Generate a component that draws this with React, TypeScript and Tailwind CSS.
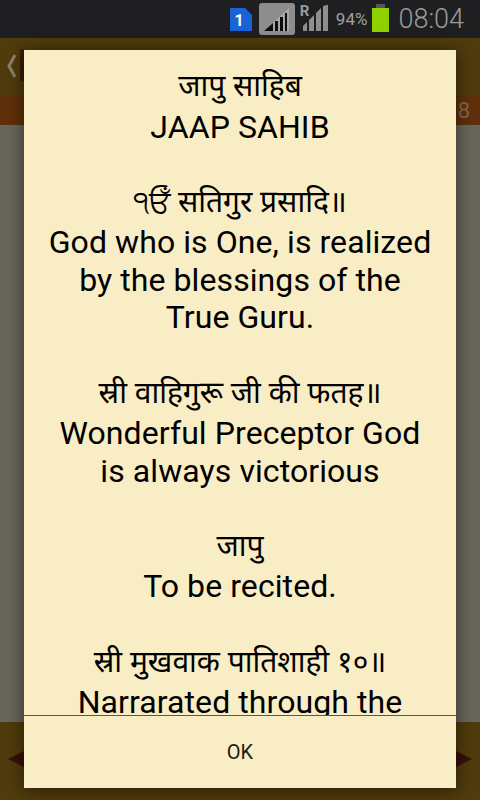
import React from 'react';

const lines: { text: string; hi?: boolean }[] = [
  { text: 'जापु साहिब', hi: true },
  { text: 'JAAP SAHIB' },
  { text: '' },
  { text: '੧ਓਁ सतिगुर प्रसादि॥', hi: true },
  { text: 'God who is One, is realized' },
  { text: 'by the blessings of the' },
  { text: 'True Guru.' },
  { text: '' },
  { text: 'स्री वाहिगुरू जी की फतह॥', hi: true },
  { text: 'Wonderful Preceptor God' },
  { text: 'is always victorious' },
  { text: '' },
  { text: 'जापु', hi: true },
  { text: 'To be recited.' },
  { text: '' },
  { text: 'स्री मुखवाक पातिशाही १०॥', hi: true },
  { text: 'Narrarated through the' },
];

const StatusBar = () => (
  <div className="h-[38px] bg-[#1f1f21] flex items-center justify-end pr-[16px] font-['Roboto',sans-serif]">
    <svg width="24" height="25" viewBox="0 0 24 25" className="mr-[6px]">
      <path d="M1 1h15l7 7v16H1z" fill="#1a62d6" />
      <text x="10" y="19" textAnchor="middle" fontSize="16" fontWeight="700" fill="#fff" fontFamily="Roboto">1</text>
    </svg>
    <svg width="36" height="32" viewBox="0 0 36 32" className="mr-[5px]">
      <rect x="0" y="0" width="36" height="32" rx="3" fill="#8d8d8d" />
      <path d="M5 28 30 5v23z" fill="#a8a8a8" />
      <path d="M5 28 14 20v8zM16 18h3v10h-3zM21 14h3v14h-3zM26 10h2v18h-2z" fill="#0c0c0c" />
    </svg>
    <div className="relative w-[32px] h-[32px] mr-[4px]">
      <span className="absolute left-0 top-[-1px] text-[15px] leading-[18px] font-bold text-[#9a9a9a]">R</span>
      <svg width="32" height="32" viewBox="0 0 32 32" className="absolute inset-0">
        <path d="M3 28v-5l4-4v9zM9 28V17l5-5v16zM16 28V10l5-5v23zM23 28V3l4-1h1v26z" fill="#8f8f8f" />
      </svg>
    </div>
    <span className="text-[17px] text-[#a0a0a0] leading-none mr-[4px]">94%</span>
    <svg width="19" height="30" viewBox="0 0 19 30" className="mr-[8px]">
      <rect x="5" y="0" width="9" height="4" fill="#555" />
      <rect x="1" y="4" width="17" height="24" fill="#8fd000" />
    </svg>
    <span className="text-[27px] text-[#9a9a9a] leading-none font-light">08:04</span>
  </div>
);

const App: React.FC = () => {
  return (
    <div className="relative w-[480px] h-[800px] overflow-hidden flex flex-col bg-[#66665a]">
      <StatusBar />

      {/* dimmed page behind the dialog */}
      <div className="h-[57px] bg-[#503b0c] flex items-center gap-[3px] pl-[7px]">
        <svg width="10" height="26" viewBox="0 0 10 26" className="mt-[-2px]">
          <path d="M8 2 2 13l6 11" fill="none" stroke="#8c8168" strokeWidth="3" />
        </svg>
        <div className="w-[5px] h-[32px] bg-[#3a1c08] rounded-l-[2px] mt-[-4px]" />
      </div>
      <div className="h-[30px] bg-[#5f300b] flex items-center justify-end pr-[10px]">
        <span className="text-[#86654a] text-[22px] font-['Roboto',sans-serif]">8</span>
      </div>
      <div className="flex-1 bg-[#66665a]" />
      <div className="h-[78px] bg-[#503b0c] flex items-center justify-between">
        <div className="w-0 h-0 border-y-[8px] border-y-transparent border-r-[16px] border-r-[#3a0f08] ml-[8px] mt-[-4px]" />
        <div className="w-0 h-0 border-y-[8px] border-y-transparent border-l-[16px] border-l-[#3a0f08] mr-[8px] mt-[-4px]" />
      </div>

      {/* dialog */}
      <div className="absolute left-[24px] top-[50px] w-[432px] h-[738px] bg-[#f8edc5] flex flex-col shadow-[0_2px_16px_rgba(0,0,0,0.55)]">
        <div className="h-[665px] overflow-hidden pt-[18px] text-center text-black font-['Roboto','Noto_Sans',sans-serif]">
          {lines.map((l, i) =>
            l.hi ? (
              <div key={i} className="h-[40.5px] leading-[34px] text-[30px] font-['Noto_Sans','Noto_Sans_Devanagari','Lohit_Devanagari',sans-serif]">
                {l.text}
              </div>
            ) : (
              <div key={i} className="h-[37.6px] leading-[37.6px] text-[32px] tracking-[0.08px] whitespace-nowrap">
                {l.text || '\u00a0'}
              </div>
            ),
          )}
        </div>
        <div className="h-px bg-[#5c5a4c]" />
        <div className="flex-1 flex items-center justify-center text-[20px] text-[#1c1c1c] font-['Roboto',sans-serif]">OK</div>
      </div>
    </div>
  );
};

export default App;
